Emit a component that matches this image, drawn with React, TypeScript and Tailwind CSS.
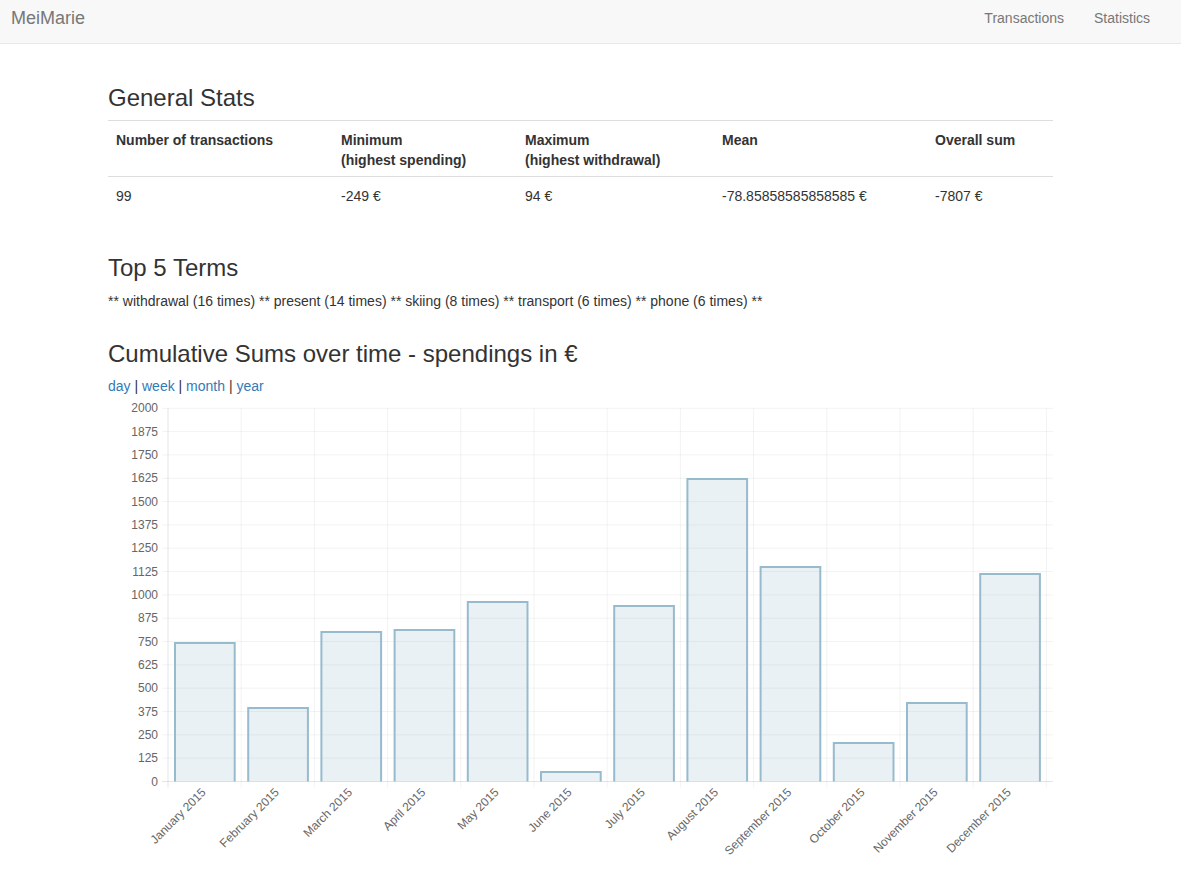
import React from "react";

const months = [
  "January 2015",
  "February 2015",
  "March 2015",
  "April 2015",
  "May 2015",
  "June 2015",
  "July 2015",
  "August 2015",
  "September 2015",
  "October 2015",
  "November 2015",
  "December 2015",
];
const tops = [642, 707, 631, 629, 601, 771, 605, 478, 566, 742, 702, 573];

function Chart() {
  const left = 168;
  const right = 1053;
  const top = 408.3;
  const zero = 781.5;
  const cat = 73.2;
  const step = (zero - top) / 16;
  const yTicks = Array.from({ length: 17 }, (_, i) => i);
  return (
    <svg width={960} height={480} className="block" style={{ overflow: "visible" }}>
      <g transform="translate(-108,-396)" fontFamily="'Liberation Sans', Arial, sans-serif" fontSize={12} fill="#666">
        {yTicks.map((i) => {
          const y = zero - i * step;
          return (
            <g key={i}>
              <line x1={162} x2={right} y1={y} y2={y} stroke={i === 0 ? "rgba(0,0,0,0.1)" : "rgba(0,0,0,0.05)"} strokeWidth={1} />
              <text x={158} y={y + 4} textAnchor="end">
                {i * 125}
              </text>
            </g>
          );
        })}
        {Array.from({ length: 13 }, (_, i) => i).map((i) => {
          const x = left + i * cat;
          return (
            <line key={i} x1={x} x2={x} y1={top} y2={zero + 6} stroke={i === 0 ? "rgba(0,0,0,0.1)" : "rgba(0,0,0,0.05)"} strokeWidth={1} />
          );
        })}
        {tops.map((t, i) => {
          const x0 = left + i * cat + 7;
          const x1 = x0 + 59.7;
          return (
            <g key={i}>
              <rect x={x0} y={t + 1} width={x1 - x0} height={zero - t - 1} fill="rgba(151,187,205,0.2)" />
              <path d={`M${x0} ${zero} V${t + 1} H${x1} V${zero}`} fill="none" stroke="#97bbcd" strokeWidth={2} />
            </g>
          );
        })}
        {months.map((m, i) => {
          const cx = left + i * cat + cat / 2 + 2;
          const y = 793;
          return (
            <text key={m} x={cx} y={y} textAnchor="end" transform={`rotate(-45 ${cx} ${y})`}>
              {m}
            </text>
          );
        })}
      </g>
    </svg>
  );
}

export default function App() {
  return (
    <div className="min-h-[876px] bg-white text-[14px] leading-[20px] text-[#333]" style={{ fontFamily: "'Liberation Sans', Arial, sans-serif" }}>
      <nav className="flex h-[44px] items-start justify-between border-b border-[#e7e7e7] bg-[#f8f8f8] pt-[8px]">
        <div className="pl-[11px] text-[18px] leading-[20px] text-[#777]">MeiMarie</div>
        <div className="flex pr-[16px] text-[#777]">
          <span className="px-[15px]">Transactions</span>
          <span className="px-[15px]">Statistics</span>
        </div>
      </nav>
      <main className="ml-[108px] w-[945px]">
        <h3 className="mt-[41px] mb-[8.6px] text-[24px] leading-[26.4px] font-medium">General Stats</h3>
        <table className="w-full border-collapse table-fixed">
          <colgroup>
            <col className="w-[225px]" />
            <col className="w-[184px]" />
            <col className="w-[197px]" />
            <col className="w-[213px]" />
            <col className="w-[126px]" />
          </colgroup>
          <thead>
            <tr className="border-t border-b border-[#ddd]">
              <th className="px-[8px] pt-[9px] pb-[6px] text-left align-top font-bold">Number of transactions</th>
              <th className="px-[8px] pt-[9px] pb-[6px] text-left align-top font-bold">
                Minimum
                <br />
                (highest spending)
              </th>
              <th className="px-[8px] pt-[9px] pb-[6px] text-left align-top font-bold">
                Maximum
                <br />
                (highest withdrawal)
              </th>
              <th className="px-[8px] pt-[9px] pb-[6px] text-left align-top font-bold">Mean</th>
              <th className="px-[8px] pt-[9px] pb-[6px] text-left align-top font-bold">Overall sum</th>
            </tr>
          </thead>
          <tbody>
            <tr>
              <td className="px-[8px] pt-[9px] pb-[7px]">99</td>
              <td className="px-[8px] pt-[9px] pb-[7px]">-249 €</td>
              <td className="px-[8px] pt-[9px] pb-[7px]">94 €</td>
              <td className="px-[8px] pt-[9px] pb-[7px]">-78.85858585858585 €</td>
              <td className="px-[8px] pt-[9px] pb-[7px]">-7807 €</td>
            </tr>
          </tbody>
        </table>
        <h3 className="mt-[42px] mb-[9.6px] text-[24px] leading-[26.4px] font-medium">Top 5 Terms</h3>
        <p>
          ** withdrawal (16 times) ** present (14 times) ** skiing (8 times) ** transport (6 times) ** phone (6 times) **
        </p>
        <h3 className="mt-[30px] mb-[8.6px] text-[24px] leading-[26.4px] font-medium">Cumulative Sums over time - spendings in €</h3>
        <div>
          <span className="text-[#337ab7]">day</span> | <span className="text-[#337ab7]">week</span> |{" "}
          <span className="text-[#337ab7]">month</span> | <span className="text-[#337ab7]">year</span>
        </div>
        <Chart />
      </main>
    </div>
  );
}
